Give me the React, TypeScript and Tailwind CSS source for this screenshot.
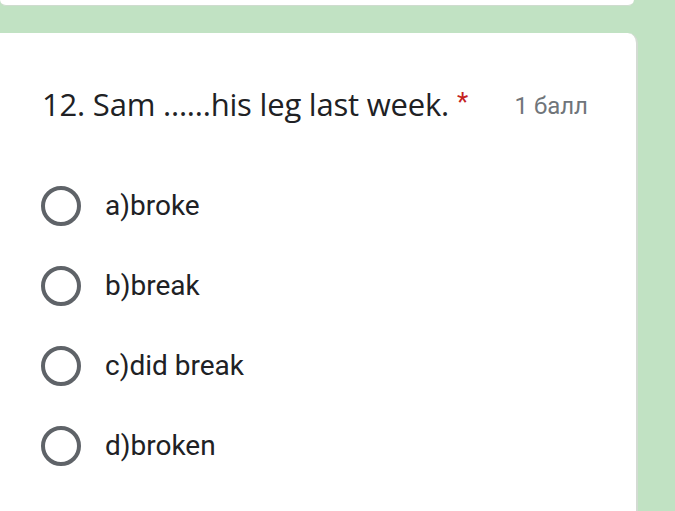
import React from "react";

const options = ["a)broke", "b)break", "c)did break", "d)broken"];

export default function App() {
  return (
    <div className="w-[675px] h-[511px] bg-[#c1e2c3] overflow-hidden flex flex-col" style={{ fontFamily: "Roboto, 'Liberation Sans', sans-serif" }}>
      <div className="w-[634px] h-[6px] bg-white rounded-b-[8px] shrink-0 border-b border-[#cfdccf]" />
      <div className="mt-[27px] w-[638px] flex-1 bg-white rounded-t-[10px] rounded-tl-none border-r-2 border-[#d3dbd3] flex flex-col pl-[42px] pr-[48px]">
        <div className="flex items-start pt-[51px]">
          <div className="text-[31px] leading-[40px] text-[#202124] tracking-[-0.2px]" style={{ fontFamily: "'Open Sans', Roboto, sans-serif" }}>
            12. Sam ......his leg last week.
          </div>
          <span className="ml-[8px] mt-[-2px] text-[26px] leading-[40px] text-[#c5221f]">*</span>
          <div className="ml-auto mt-[6px] text-[24px] leading-[32px] text-[#70757a]">1 балл</div>
        </div>
        <div className="flex flex-col mt-[42px]">
          {options.map((o) => (
            <div key={o} className="flex items-center h-[80px]">
              <div className="w-[40px] h-[40px] rounded-full border-[4px] border-[#5f6368] -ml-[1px]" />
              <div className="ml-[24px] text-[28px] text-[#202124] leading-[32px]">{o}</div>
            </div>
          ))}
        </div>
      </div>
    </div>
  );
}
